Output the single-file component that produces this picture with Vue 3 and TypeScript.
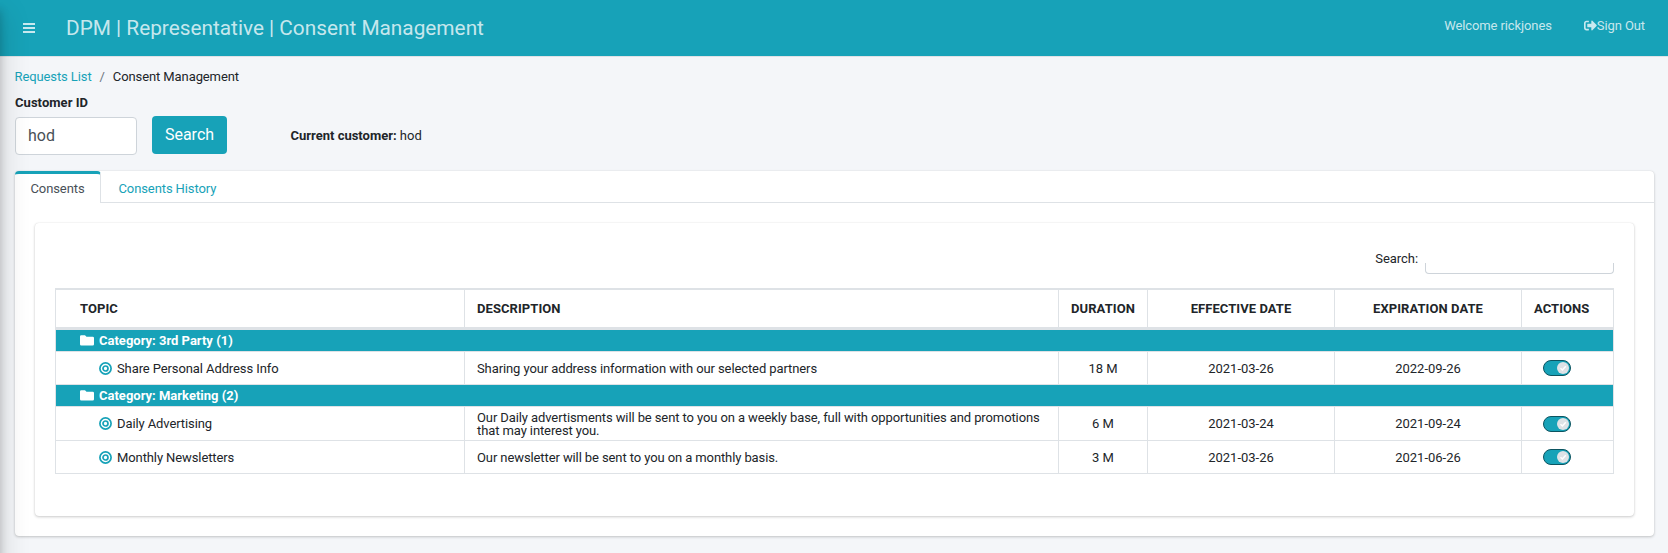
<script setup lang="ts">
interface Consent {
  topic: string
  description: string
  duration: string
  effective: string
  expiration: string
}
interface Category {
  name: string
  consents: Consent[]
}

const headings: string[] = ['TOPIC', 'DESCRIPTION', 'DURATION', 'EFFECTIVE DATE', 'EXPIRATION DATE', 'ACTIONS']

const categories: Category[] = [
  {
    name: '3rd Party',
    consents: [
      {
        topic: 'Share Personal Address Info',
        description: 'Sharing your address information with our selected partners',
        duration: '18 M',
        effective: '2021-03-26',
        expiration: '2022-09-26',
      },
    ],
  },
  {
    name: 'Marketing',
    consents: [
      {
        topic: 'Daily Advertising',
        description:
          'Our Daily advertisments will be sent to you on a weekly base, full with opportunities and promotions that may interest you.',
        duration: '6 M',
        effective: '2021-03-24',
        expiration: '2021-09-24',
      },
      {
        topic: 'Monthly Newsletters',
        description: 'Our newsletter will be sent to you on a monthly basis.',
        duration: '3 M',
        effective: '2021-03-26',
        expiration: '2021-06-26',
      },
    ],
  },
]
</script>

<template>
  <div class="page">
    <header class="topbar">
      <svg class="burger" viewBox="0 0 12 10" width="12" height="10">
        <path d="M0 1h12M0 5h12M0 9h12" stroke="currentColor" stroke-width="2" />
      </svg>
      <h1 class="brand">DPM | Representative | Consent Management</h1>
      <span class="welcome">Welcome rickjones</span>
      <a class="signout">
        <svg viewBox="0 0 512 512" width="13" height="13">
          <path fill="currentColor" d="M497 273L329 441c-15 15-41 4.500-41-17v-96H152c-13.300 0-24-10.700-24-24v-96c0-13.300 10.700-24 24-24h136V88c0-21.400 25.900-32 41-17l168 168c9.300 9.400 9.300 24.600 0 34zM192 436v-40c0-6.600-5.400-12-12-12H96c-17.700 0-32-14.300-32-32V160c0-17.700 14.300-32 32-32h84c6.600 0 12-5.400 12-12V76c0-6.600-5.400-12-12-12H96c-53 0-96 43-96 96v192c0 53 43 96 96 96h84c6.600 0 12-5.400 12-12z" />
        </svg><span>Sign Out</span>
      </a>
    </header>

    <main class="content">
      <nav class="crumbs">
        <a class="link">Requests List</a><span class="slash">/</span><span>Consent Management</span>
      </nav>
      <label class="field-label">Customer ID</label>
      <div class="search-row">
        <div class="customer-input">hod</div>
        <button class="search-btn" type="button">Search</button>
        <div class="current"><b>Current customer:</b> hod</div>
      </div>

      <section class="tabs-card">
        <div class="tabs">
          <div class="tab active"><span>Consents</span></div>
          <div class="tab"><span>Consents History</span></div>
        </div>
        <div class="panel">
          <div class="filter">
            <span class="filter-label">Search:</span>
            <div class="filter-input"></div>
          </div>
          <div class="table">
            <div class="row head">
              <div v-for="h in headings" :key="h" class="cell"><span>{{ h }}</span></div>
            </div>
            <template v-for="cat in categories" :key="cat.name">
              <div class="group">
                <svg viewBox="0 0 14 11" width="14" height="11">
                  <path fill="#fff" d="M1.300 0.300H5l1.500 1.500h6.200A1.300 1.300 0 0 1 14 3.100v6.100a1.300 1.300 0 0 1-1.300 1.300H1.300A1.300 1.300 0 0 1 0 9.200V1.600A1.300 1.300 0 0 1 1.300.3z" />
                </svg>
                <span>Category: {{ cat.name }} ({{ cat.consents.length }})</span>
              </div>
              <div v-for="c in cat.consents" :key="c.topic" class="row body">
                <div class="cell topic">
                  <svg viewBox="0 0 13 13" width="13" height="13" fill="none" stroke="#17a2b8">
                    <circle cx="6.500" cy="6.500" r="5.600" stroke-width="1.700" />
                    <circle cx="6.500" cy="6.500" r="2.500" stroke-width="1.700" />
                  </svg>
                  <span>{{ c.topic }}</span>
                </div>
                <div class="cell desc"><span>{{ c.description }}</span></div>
                <div class="cell"><span>{{ c.duration }}</span></div>
                <div class="cell"><span>{{ c.effective }}</span></div>
                <div class="cell"><span>{{ c.expiration }}</span></div>
                <div class="cell action">
                  <div class="toggle">
                    <div class="knob">
                      <svg viewBox="0 0 12 12" width="12" height="12">
                        <path d="M3.500 6.300l1.900 1.700L8.800 4.200" fill="none" stroke="#fff" stroke-width="1.500" />
                      </svg>
                    </div>
                  </div>
                </div>
              </div>
            </template>
          </div>
        </div>
      </section>
    </main>
    <div class="edge-shade"></div>
  </div>
</template>

<style>
body {
  background: #f4f6f9;
  overflow: hidden;
}
</style>

<style scoped>
* {
  box-sizing: border-box;
}
.page {
  position: relative;
  width: 1668px;
  height: 553px;
  overflow: hidden;
  background: #f4f6f9;
  font: 13px/20px Roboto, "Liberation Sans", sans-serif;
  color: #212529;
}
.topbar {
  height: 57px;
  display: flex;
  align-items: center;
  background: #17a2b8;
  border-bottom: 1px solid #dee2e6;
  color: rgba(255, 255, 255, 0.77);
  padding: 0 23px;
}
.brand {
  margin: 0 auto 0 31px;
  font-size: 20.8px;
  font-weight: 400;
  line-height: 28px;
}
.welcome {
  margin: -5px 32px 0 0;
  letter-spacing: -0.1px;
}
.signout {
  display: flex;
  align-items: center;
  margin-top: -5px;
  letter-spacing: -0.1px;
}
.content {
  padding: 10px 14px 0 15px;
}
.crumbs {
  display: flex;
  height: 20px;
  letter-spacing: -0.1px;
  margin-left: -0.5px;
}
.link {
  color: #17a2b8;
}
.slash {
  color: #6c757d;
  padding: 0 8px;
}
.field-label {
  display: block;
  height: 20px;
  margin-top: 6px;
  font-weight: 700;
  letter-spacing: 0.05px;
}
.search-row {
  display: flex;
  margin-top: 3px;
  height: 38px;
}
.customer-input {
  width: 122px;
  height: 38px;
  margin-top: 1px;
  border: 1px solid #ced4da;
  border-radius: 4px;
  background: #fff;
  color: #495057;
  font-size: 16px;
  line-height: 36px;
  padding-left: 12px;
}
.search-btn {
  width: 75px;
  height: 38px;
  margin-left: 15px;
  padding: 0;
  border: 0;
  border-radius: 4px;
  background: #17a2b8;
  color: #fff;
  font: 16px/36px Roboto, sans-serif;
}
.current {
  margin: 10px 0 0 63.5px;
}
.tabs-card {
  margin-top: 17px;
  height: 365px;
  background: #fff;
  border-radius: 4px;
  box-shadow: 0 0 1px rgba(0, 0, 0, 0.125), 0 1px 3px rgba(0, 0, 0, 0.2);
}
.tabs {
  display: flex;
  height: 32px;
  border-bottom: 1px solid #dee2e6;
  letter-spacing: -0.1px;
}
.tab {
  color: #17a2b8;
  padding: 8px 0 0 17.5px;
}
.tab.active {
  width: 86px;
  height: 32px;
  padding: 5px 0 0 15.5px;
  color: #495057;
  background: #fff;
  border-top: 3px solid #17a2b8;
  border-right: 1px solid #dee2e6;
  border-radius: 4px 4px 0 0;
}
.panel {
  margin: 20px 20px 0;
  height: 293px;
  padding: 25px 20px 0;
  border-radius: 4px;
  background: #fff;
  box-shadow: 0 0 1px rgba(0, 0, 0, 0.125), 0 1px 3px rgba(0, 0, 0, 0.2);
}
.filter {
  display: flex;
  justify-content: flex-end;
  height: 40px;
}
.filter-label {
  margin-top: 1px;
  letter-spacing: -0.05px;
}
.filter-input {
  width: 189px;
  height: 11px;
  margin: 15px 0 0 7px;
  border: 1px solid #ced4da;
  border-top: 0;
  border-radius: 0 0 4px 4px;
}
.table {
  border: 1px solid #dee2e6;
  border-bottom: 0;
  border-top-width: 2px;
}
.row {
  display: grid;
  grid-template-columns: 409px 594px 89px 187px 187px 1fr;
}
.cell {
  display: flex;
  align-items: center;
  justify-content: center;
  border-right: 1px solid #dee2e6;
  white-space: nowrap;
}
.cell:last-child {
  border-right: 0;
}
.head {
  height: 40px;
  border-bottom: 3px solid #dee2e6;
  font-weight: 700;
  letter-spacing: 0.07px;
}
.head .cell:nth-child(-n + 2) {
  justify-content: flex-start;
  padding-left: 12px;
}
.head .cell:first-child {
  padding-left: 24px;
}
.head .cell:last-child {
  justify-content: flex-start;
  padding-left: 12px;
}
.group {
  display: flex;
  align-items: center;
  height: 22px;
  padding-left: 23.5px;
  gap: 5.5px;
  background: #17a2b8;
  border-bottom: 1px solid #dee2e6;
  color: #fff;
  font-weight: 700;
}
.group span {
  padding-top: 1px;
}
.body {
  height: 33px;
  border-bottom: 1px solid #dee2e6;
  line-height: 13px;
}
.group + .body:nth-last-child(2) {
  height: 34px;
}
.topic {
  justify-content: flex-start;
  padding-left: 42.5px;
  gap: 5.5px;
  letter-spacing: -0.1px;
}
.desc {
  justify-content: flex-start;
  padding: 0 12px;
  white-space: normal;
  letter-spacing: -0.1px;
}
.action {
  justify-content: flex-start;
  padding-left: 21px;
}
.toggle {
  display: flex;
  justify-content: flex-end;
  align-items: center;
  width: 28px;
  height: 16px;
  padding-right: 1px;
  border: 1px solid #0c5460;
  border-radius: 8px;
  background: #17a2b8;
}
.knob {
  width: 12px;
  height: 12px;
  border-radius: 50%;
  background: #dee2e6;
}
.knob svg {
  display: block;
}
.edge-shade {
  position: absolute;
  left: -10px;
  top: 0;
  width: 10px;
  height: 570px;
  box-shadow: 0 14px 28px rgba(0, 0, 0, 0.25), 0 10px 10px rgba(0, 0, 0, 0.22);
}
</style>
